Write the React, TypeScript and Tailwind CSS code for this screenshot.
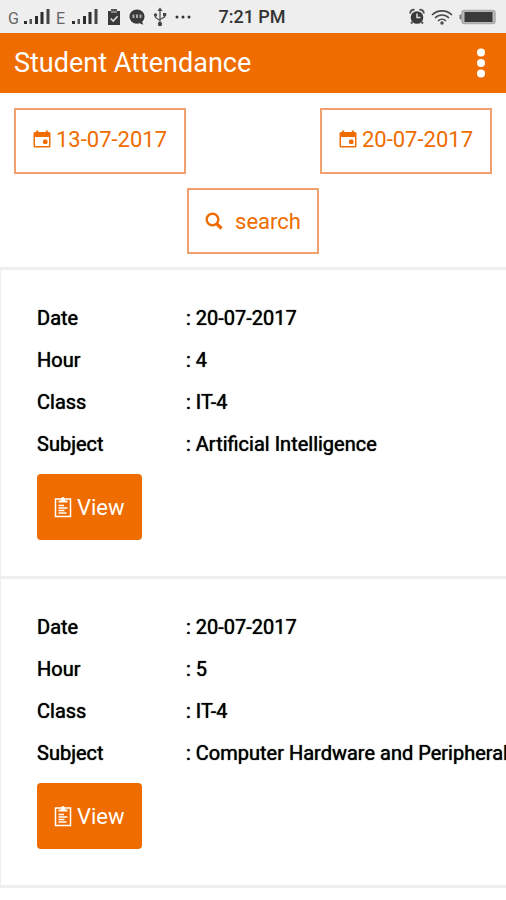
import { useState } from "react";

const records = [
  { date: "20-07-2017", hour: "4", className: "IT-4", subject: "Artificial Intelligence" },
  { date: "20-07-2017", hour: "5", className: "IT-4", subject: "Computer Hardware and Peripherals" },
];

function SignalBars() {
  return (
    <svg width="28" height="18" viewBox="0 0 28 18" fill="#2b2b2b" aria-hidden="true">
      <rect x="0" y="13" width="3" height="3" />
      <rect x="5.5" y="11" width="2.5" height="5" fill="#555" />
      <rect x="11" y="8" width="3" height="8" />
      <rect x="16.5" y="4" width="3" height="12" />
      <rect x="22.5" y="1" width="3" height="15" fill="#444" />
    </svg>
  );
}

function TaskIcon() {
  return (
    <svg width="14" height="18" viewBox="0 0 14 18" aria-hidden="true">
      <path d="M1 3h12v14H1z" fill="#3a3a3a" />
      <rect x="4" y="1" width="6" height="4" fill="#555" />
      <path d="M4 4h6" stroke="#bbb" strokeWidth="1" />
      <path d="M3.8 10.5l2.4 2.6 4.4-4.9" fill="none" stroke="#ddd" strokeWidth="1.6" />
    </svg>
  );
}

function ChatIcon() {
  return (
    <svg width="16" height="18" viewBox="0 0 16 18" aria-hidden="true">
      <path d="M8 1.5c4.2 0 7.5 3 7.5 7 0 2.2-.9 4-2.3 5.3l1 3-3.6-1.5c-.8.2-1.7.4-2.6.4-4.2 0-7.5-3.1-7.5-7.2 0-4 3.3-7 7.5-7z" fill="#3a3a3a" />
      <g fill="#aaa">
        <rect x="3.5" y="6.5" width="2" height="3.5" />
        <rect x="7" y="6.5" width="2" height="3.5" />
        <rect x="10.5" y="6.5" width="2" height="3.5" />
      </g>
    </svg>
  );
}

function UsbIcon() {
  return (
    <svg width="14" height="20" viewBox="0 0 14 20" fill="#444" aria-hidden="true">
      <path d="M7 .5L9.5 4h-5z" />
      <circle cx="7" cy="17" r="2.2" />
      <circle cx="2.5" cy="8" r="1.7" />
      <rect x="10" y="6" width="3.2" height="3.2" />
      <path d="M7 3v13M2.5 8v2.5L7 13.5M11.5 8v2L7 12.5" fill="none" stroke="#555" strokeWidth="1.3" />
    </svg>
  );
}

function AlarmIcon() {
  return (
    <svg width="16" height="18" viewBox="0 0 16 18" aria-hidden="true">
      <path d="M1.5 5.5a3 3 0 0 1 4-3.5M14.5 5.5a3 3 0 0 0-4-3.5M3.5 14L2 15.5M12.5 14l1.5 1.5" stroke="#555" strokeWidth="2" fill="none" />
      <circle cx="8" cy="9.5" r="6.3" fill="#3a3a3a" />
      <path d="M8 5.5v4h3.5" fill="none" stroke="#ddd" strokeWidth="1.5" />
    </svg>
  );
}

function WifiIcon() {
  return (
    <svg width="22" height="18" viewBox="0 0 22 18" fill="none" stroke="#4a4a4a" strokeWidth="1.6" aria-hidden="true">
      <path d="M1 7c5.5-5.5 14.5-5.5 20 0M4 10c4-4 10-4 14 0M7 13c2.3-2.3 5.7-2.3 8 0" />
      <circle cx="11" cy="15" r="1.7" fill="#4a4a4a" stroke="none" />
    </svg>
  );
}

function BatteryIcon() {
  return (
    <svg width="37" height="16" viewBox="0 0 37 16" aria-hidden="true">
      <rect x="0.5" y="5.5" width="3" height="5" rx="1" fill="#777" />
      <rect x="3" y="1.5" width="33" height="13" rx="2.5" fill="#bbb" stroke="#aaa" strokeWidth="1.5" />
      <rect x="5.5" y="3" width="28" height="10" fill="#3a3a3a" />
    </svg>
  );
}

function CalendarIcon() {
  return (
    <svg width="18" height="18" viewBox="0 0 18 18" fill="#ef6c00" aria-hidden="true">
      <path d="M2 2h14a1.5 1.5 0 0 1 1.5 1.5V16a1.5 1.5 0 0 1-1.5 1.5H2A1.5 1.5 0 0 1 .5 16V3.5A1.5 1.5 0 0 1 2 2zM2 7v9h14V7z" fillRule="evenodd" />
      <path d="M3.2.5h2v3h-2zM12.8.5h2v3h-2z" />
      <rect x="10" y="9.5" width="4.5" height="4.5" rx="1.5" />
    </svg>
  );
}

function SearchIcon() {
  return (
    <svg width="18" height="18" viewBox="0 0 18 18" fill="none" stroke="#ef6c00" aria-hidden="true">
      <circle cx="7.5" cy="7.5" r="5.8" strokeWidth="2.4" />
      <path d="M11.5 11.5l5 5" strokeWidth="3.2" />
    </svg>
  );
}

function ClipboardIcon() {
  return (
    <svg width="18" height="22" viewBox="0 0 18 22" fill="none" stroke="#fff" aria-hidden="true">
      <rect x="1.5" y="3" width="15" height="17.5" strokeWidth="1.5" />
      <path d="M4.5 6.5V4.5h2.5C7 2.5 7.8 1 9 1s2 1.5 2 3.5h2.5v2z" fill="#fff" stroke="none" />
      <path d="M4.5 9.5h5.5M4.5 12h9M4.5 14.5h6M4.5 17h8" strokeWidth="1.3" />
    </svg>
  );
}

function StatusBar() {
  return (
    <div className="flex h-[33px] items-center bg-[#eeeeee] pl-2 pr-[10px] text-[#333333]">
      <div className="flex flex-1 items-center">
        <span className="w-4 pt-1 text-base leading-none text-[#666666]">G</span>
        <SignalBars />
        <span className="ml-1 w-4 pt-1 text-base leading-none text-[#666666]">E</span>
        <SignalBars />
        <div className="ml-[7px] flex items-center gap-2">
          <TaskIcon />
          <ChatIcon />
          <UsbIcon />
          <svg width="16" height="4" viewBox="0 0 16 4" fill="#333" aria-hidden="true">
            <circle cx="2" cy="2" r="1.5" />
            <circle cx="8" cy="2" r="1.5" />
            <circle cx="14" cy="2" r="1.5" />
          </svg>
        </div>
      </div>
      <span className="text-lg font-medium">7:21 PM</span>
      <div className="flex flex-1 items-center justify-end gap-[6px]">
        <AlarmIcon />
        <WifiIcon />
        <BatteryIcon />
      </div>
    </div>
  );
}

function DateButton({ value }: { value: string }) {
  return (
    <button className="flex h-[66px] items-center gap-[5px] border-2 border-[#f3a070] px-[17px] pb-1 text-[22px] text-[#ef6c00]">
      <CalendarIcon />
      {value}
    </button>
  );
}

function Field({ label, value }: { label: string; value: string }) {
  return (
    <div className="flex h-[42px] items-center whitespace-nowrap">
      <dt className="w-[149px] shrink-0">{label}</dt>
      <dd>: {value}</dd>
    </div>
  );
}

export default function App() {
  const [menuOpen, setMenuOpen] = useState(false);

  return (
    <div className="min-h-screen overflow-x-hidden bg-white font-['Roboto',sans-serif]">
      <StatusBar />

      <header className="flex h-[60px] items-center justify-between bg-[#ef6c00] pl-[14px] pr-[15px] text-white">
        <h1 className="text-[27px]">Student Attendance</h1>
        <button aria-label="More options" aria-expanded={menuOpen} onClick={() => setMenuOpen(!menuOpen)}>
          <svg width="20" height="32" viewBox="0 0 20 32" fill="#fff" aria-hidden="true">
            <circle cx="10" cy="5.5" r="4" />
            <circle cx="10" cy="16" r="4" />
            <circle cx="10" cy="26.5" r="4" />
          </svg>
        </button>
      </header>

      {/* Date range and search */}
      <section className="px-[14px] pb-[13px] pt-[15px]">
        <div className="flex justify-between">
          <DateButton value="13-07-2017" />
          <DateButton value="20-07-2017" />
        </div>
        <div className="mt-[14px] flex justify-center">
          <button className="flex h-[66px] items-center gap-3 border-2 border-[#f3a070] px-4 text-[22px] text-[#ef6c00]">
            <SearchIcon />
            search
          </button>
        </div>
      </section>

      <main className="border-b-[3px] border-[#eeeeee]">
        {records.map((r) => (
          <article key={r.hour} className="border-l border-t-[3px] border-[#eeeeee] pb-9 pl-9 pt-[27px]">
            <dl className="text-xl text-black [text-shadow:0_0_1px_#000]">
              <Field label="Date" value={r.date} />
              <Field label="Hour" value={r.hour} />
              <Field label="Class" value={r.className} />
              <Field label="Subject" value={r.subject} />
            </dl>
            <button className="mt-[9px] flex h-[66px] items-center gap-[5px] rounded bg-[#ef6c00] px-[17px] text-[22px] text-white">
              <ClipboardIcon />
              View
            </button>
          </article>
        ))}
      </main>
    </div>
  );
}
